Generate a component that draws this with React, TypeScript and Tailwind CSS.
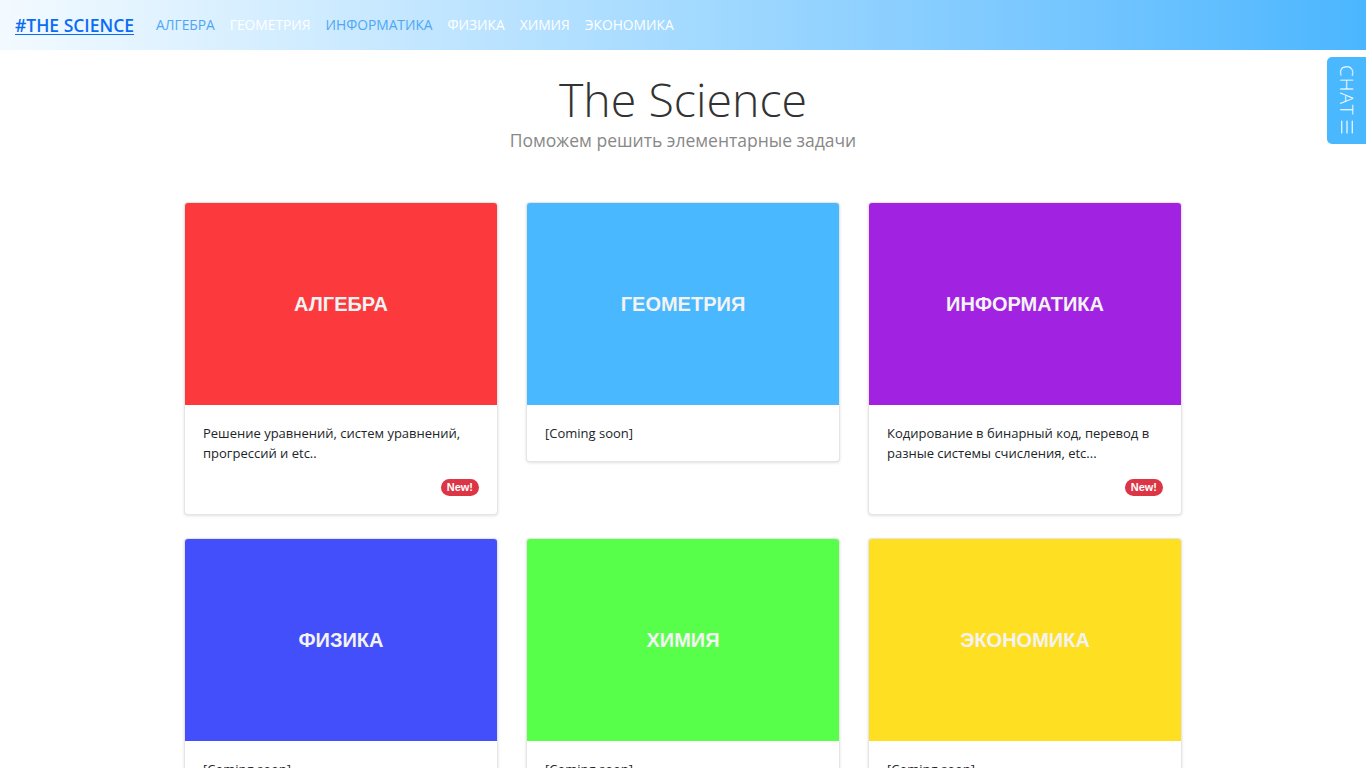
import { Menu } from 'lucide-react';

type Subject = {
  title: string;
  color: string;
  text: string;
  isNew?: boolean;
};

const subjects: Subject[] = [
  { title: 'АЛГЕБРА', color: 'bg-[#fc3a3d]', text: 'Решение уравнений, систем уравнений, прогрессий и etc..', isNew: true },
  { title: 'ГЕОМЕТРИЯ', color: 'bg-[#4ab8ff]', text: '[Coming soon]' },
  { title: 'ИНФОРМАТИКА', color: 'bg-[#a222e2]', text: 'Кодирование в бинарный код, перевод в разные системы счисления, etc...', isNew: true },
  { title: 'ФИЗИКА', color: 'bg-[#444ffc]', text: '[Coming soon]' },
  { title: 'ХИМИЯ', color: 'bg-[#58ff4a]', text: '[Coming soon]' },
  { title: 'ЭКОНОМИКА', color: 'bg-[#ffdf22]', text: '[Coming soon]' },
];

const navLinks = [
  { label: 'АЛГЕБРА', cls: 'text-[#4ea6f5]' },
  { label: 'ГЕОМЕТРИЯ', cls: 'text-white' },
  { label: 'ИНФОРМАТИКА', cls: 'text-[#4ea6f5]' },
  { label: 'ФИЗИКА', cls: 'text-white' },
  { label: 'ХИМИЯ', cls: 'text-white' },
  { label: 'ЭКОНОМИКА', cls: 'text-white' },
];

export default function App() {
  return (
    <div className="min-h-screen bg-white font-['Open_Sans','Noto_Sans',sans-serif] text-[#212529]">
      <nav className="h-[50px] flex items-center px-[15px] bg-gradient-to-r from-[#f3faff] via-[#a4daff] to-[#4ab6ff]">
        <a href="#" className="text-[17.5px] font-semibold text-[#0a6cf5] underline underline-offset-2">
          #THE SCIENCE
        </a>
        <ul className="flex items-center gap-[15px] ml-[22px] text-[13.8px] pt-[1px]">
          {navLinks.map((l) => (
            <li key={l.label}>
              <a href="#" className={l.cls}>{l.label}</a>
            </li>
          ))}
        </ul>
      </nav>

      <header className="text-center pt-[19px]">
        <h1 className="text-[46.5px] font-light leading-[60px] text-[#333]">The Science</h1>
        <p className="text-[17.5px] leading-[22px] text-[#888] font-normal">Поможем решить элементарные задачи</p>
      </header>

      <main className="w-[998px] mx-auto mt-[51px] grid grid-cols-3 gap-x-[28px] gap-y-[23px] items-start">
        {subjects.map((s) => (
          <article
            key={s.title}
            className="bg-white border border-black/10 rounded-[4px] overflow-hidden shadow-[0_1px_3px_rgba(0,0,0,0.12)]"
          >
            <div className={`h-[202px] flex items-center justify-center ${s.color}`}>
              <h2 className="font-['Liberation_Sans',Arial,sans-serif] font-bold text-[20px] text-[#f3f3f3]">
                {s.title}
              </h2>
            </div>
            <div className="px-[18px] pt-[18px] pb-[18px]">
              <p className="text-[13px] leading-[20px]">{s.text}</p>
              {s.isNew && (
                <div className="flex justify-end mt-[16px]">
                  <span className="bg-[#dc3545] text-white font-['Liberation_Sans',Arial,sans-serif] font-bold text-[11px] leading-[17px] px-[6px] rounded-full">
                    New!
                  </span>
                </div>
              )}
            </div>
          </article>
        ))}
      </main>

      <button className="fixed right-0 top-[57px] w-[39px] h-[87px] bg-[#4ab8ff] rounded-l-[5px] text-white flex items-center justify-center">
        <span className="[writing-mode:vertical-rl] flex items-center gap-[2px] text-[19px] font-light tracking-[1px]">
          CHAT
          <Menu size={18} strokeWidth={1.5} className="rotate-90" />
        </span>
      </button>
    </div>
  );
}
